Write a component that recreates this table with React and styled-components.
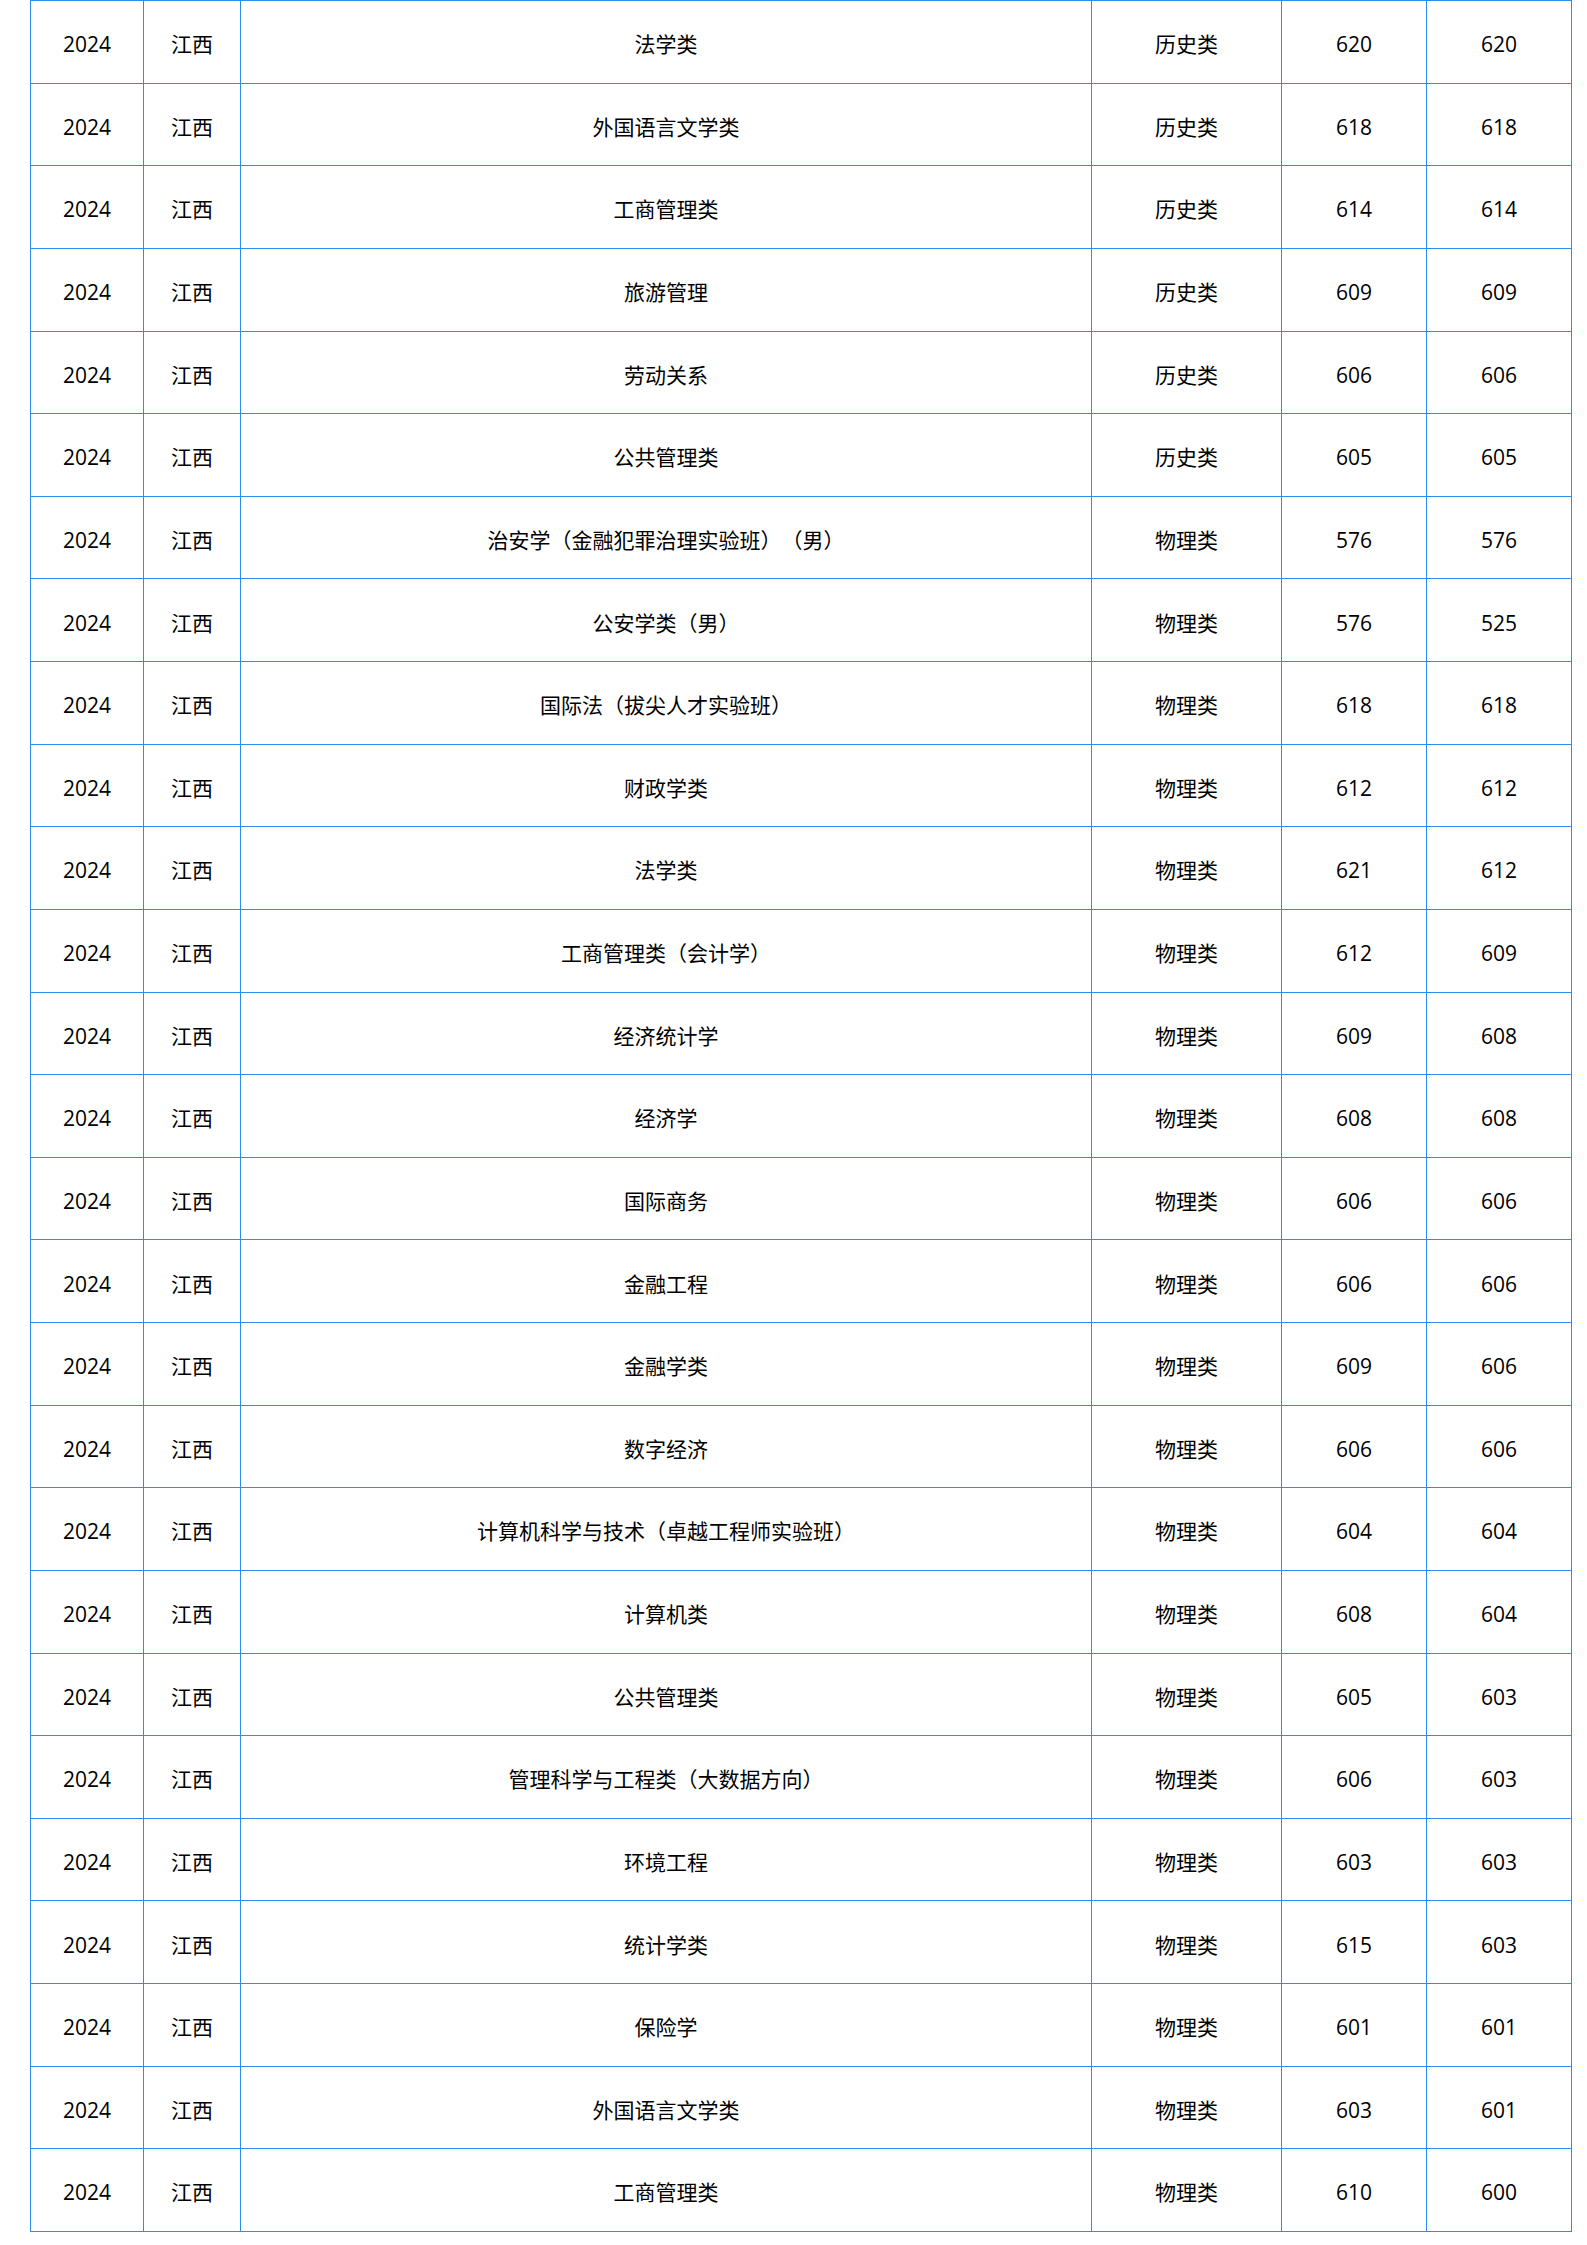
import React from "react";
import styled, { createGlobalStyle } from "styled-components";

const Global = createGlobalStyle`
  html, body { margin: 0; padding: 0; background: #fff; }
  body { font-family: "Open Sans", "Noto Sans CJK SC", sans-serif; color: #000; }
`;

const Page = styled.div`
  padding: 0 0 0 30px;
`;

const Table = styled.table`
  border-collapse: collapse;
  table-layout: fixed;
  width: 1541px;
  font-size: 21px;
  text-spacing-trim: space-all;
`;

const Row = styled.tr`
  height: 82.63px;
`;

const Cell = styled.td`
  border: 1px solid #2a8ef5;
  text-align: center;
  vertical-align: middle;
  padding: 6px 0 0 0;
  line-height: 1.2;
  color: #000;
  text-spacing-trim: space-all;
`;

const rows = [
  ["法学类", "历史类", 620, 620],
  ["外国语言文学类", "历史类", 618, 618],
  ["工商管理类", "历史类", 614, 614],
  ["旅游管理", "历史类", 609, 609],
  ["劳动关系", "历史类", 606, 606],
  ["公共管理类", "历史类", 605, 605],
  ["治安学（金融犯罪治理实验班）（男）", "物理类", 576, 576],
  ["公安学类（男）", "物理类", 576, 525],
  ["国际法（拔尖人才实验班）", "物理类", 618, 618],
  ["财政学类", "物理类", 612, 612],
  ["法学类", "物理类", 621, 612],
  ["工商管理类（会计学）", "物理类", 612, 609],
  ["经济统计学", "物理类", 609, 608],
  ["经济学", "物理类", 608, 608],
  ["国际商务", "物理类", 606, 606],
  ["金融工程", "物理类", 606, 606],
  ["金融学类", "物理类", 609, 606],
  ["数字经济", "物理类", 606, 606],
  ["计算机科学与技术（卓越工程师实验班）", "物理类", 604, 604],
  ["计算机类", "物理类", 608, 604],
  ["公共管理类", "物理类", 605, 603],
  ["管理科学与工程类（大数据方向）", "物理类", 606, 603],
  ["环境工程", "物理类", 603, 603],
  ["统计学类", "物理类", 615, 603],
  ["保险学", "物理类", 601, 601],
  ["外国语言文学类", "物理类", 603, 601],
  ["工商管理类", "物理类", 610, 600],
];

const widths = [113, 97, 851, 190, 145, 145];

export default function App() {
  return (
    <Page>
      <Global />
      <Table>
        <colgroup>
          {widths.map((w, i) => (
            <col key={i} style={{ width: w }} />
          ))}
        </colgroup>
        <tbody>
          {rows.map((r, i) => (
            <Row key={i}>
              <Cell>2024</Cell>
              <Cell>江西</Cell>
              <Cell>{r[0]}</Cell>
              <Cell>{r[1]}</Cell>
              <Cell>{r[2]}</Cell>
              <Cell>{r[3]}</Cell>
            </Row>
          ))}
        </tbody>
      </Table>
    </Page>
  );
}
